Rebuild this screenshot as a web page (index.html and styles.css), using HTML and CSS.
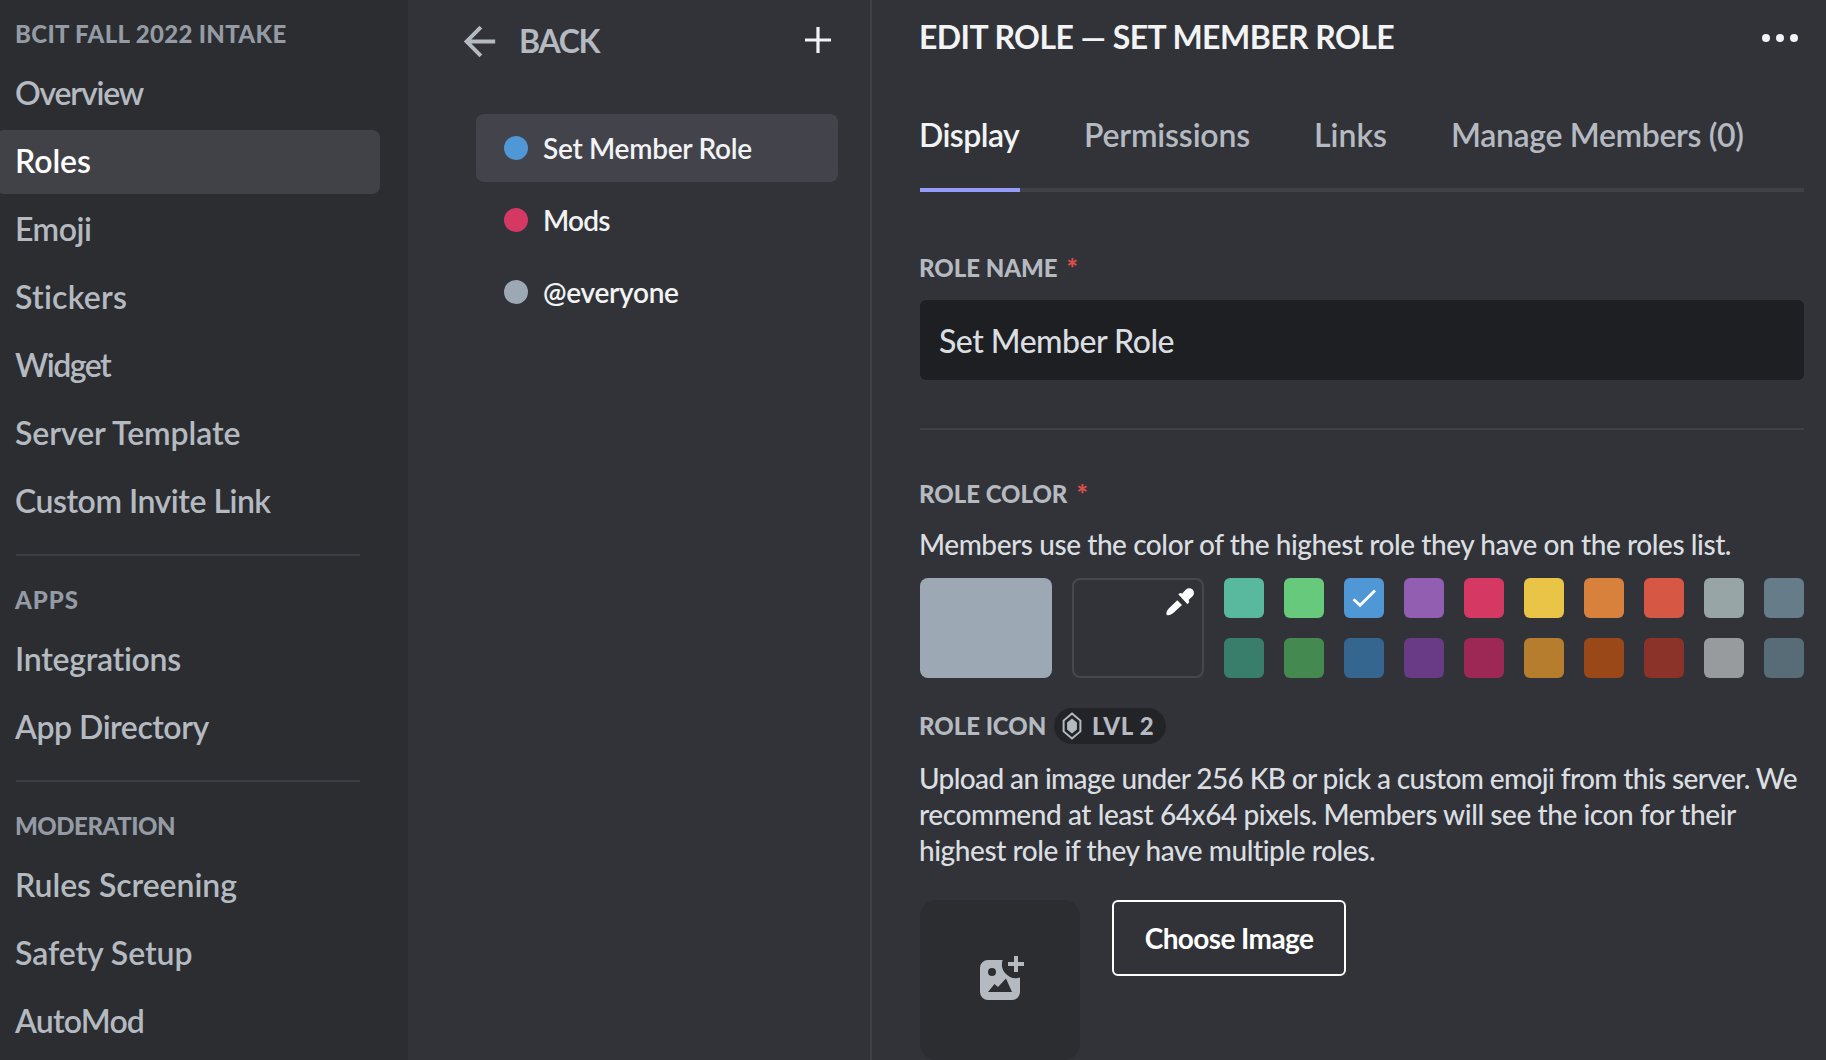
FILE: index.html
```html
<!DOCTYPE html>
<html lang="en">
<head>
<meta charset="utf-8">
<title>Edit Role</title>
<link rel="stylesheet" href="styles.css">
</head>
<body>
<div class="app">
  <nav class="sidebar">
    <h2 class="nav-heading server-name">BCIT FALL 2022 INTAKE</h2>
    <a class="nav-item tight-4">Overview</a>
    <a class="nav-item selected">Roles</a>
    <a class="nav-item tight-2">Emoji</a>
    <a class="nav-item loose-1">Stickers</a>
    <a class="nav-item tight-5">Widget</a>
    <a class="nav-item">Server Template</a>
    <a class="nav-item tight-2">Custom Invite Link</a>
    <hr class="nav-divider">
    <h2 class="nav-heading loose-3">APPS</h2>
    <a class="nav-item tight-1">Integrations</a>
    <a class="nav-item tight-2">App Directory</a>
    <hr class="nav-divider">
    <h2 class="nav-heading tight-2">MODERATION</h2>
    <a class="nav-item">Rules Screening</a>
    <a class="nav-item">Safety Setup</a>
    <a class="nav-item tight-3">AutoMod</a>
  </nav>

  <section class="roles">
    <header class="roles-header">
      <svg class="back-icon" viewBox="0 0 24 24"><path d="M20 11H7.830l5.590-5.590L12 4l-8 8 8 8 1.410-1.410L7.830 13H20v-2z"/></svg>
      <span class="back-label">BACK</span>
      <svg class="plus-icon" viewBox="0 0 26 26"><path d="M13 0v26M0 13h26"/></svg>
    </header>
    <ul class="role-list">
      <li class="role active tight-1"><span class="dot blue"></span>Set Member Role</li>
      <li class="role tight-3"><span class="dot pink"></span>Mods</li>
      <li class="role tight-1"><span class="dot gray"></span>@everyone</li>
    </ul>
  </section>

  <main class="editor">
    <header class="editor-header">
      <h1 class="title">EDIT ROLE — SET MEMBER ROLE</h1>
      <svg class="more-icon" viewBox="0 0 36 8"><circle cx="4" cy="4" r="4"/><circle cx="18" cy="4" r="4"/><circle cx="32" cy="4" r="4"/></svg>
    </header>
    <div class="tabs">
      <a class="tab current">Display</a>
      <a class="tab permissions">Permissions</a>
      <a class="tab">Links</a>
      <a class="tab members">Manage Members (0)</a>
    </div>

    <h3 class="label name-label">ROLE NAME<span class="required">*</span></h3>
    <div class="name-input">Set Member Role</div>
    <hr class="divider">

    <h3 class="label">ROLE COLOR<span class="required">*</span></h3>
    <p class="text">Members use the color of the highest role they have on the roles list.</p>
    <div class="colors">
      <div class="color-default"></div>
      <div class="color-custom">
        <svg class="dropper" viewBox="0 0 28 28"><path d="M12.3 6.2L14.2 5l2 .6L20 1.6A4.6 4.6 0 0 1 26.600 8.200l-4 3.900.7 2-1.800 2.200zM11.300 12.200L16 17l-9 8.300Q4 27.600 1.600 27.300.3 27 .3 25.500.6 22.500 3 20.200z"/></svg>
      </div>
      <div class="swatches">
        <i class="swatch teal"></i><i class="swatch green"></i><i class="swatch blue"><svg viewBox="0 0 40 40"><path d="M9.5 21.3l6.5 6L31 12.5"/></svg></i><i class="swatch purple"></i><i class="swatch pink"></i><i class="swatch yellow"></i><i class="swatch orange"></i><i class="swatch red"></i><i class="swatch light-gray"></i><i class="swatch slate"></i>
        <i class="swatch dark-teal"></i><i class="swatch dark-green"></i><i class="swatch dark-blue"></i><i class="swatch dark-purple"></i><i class="swatch dark-pink"></i><i class="swatch dark-yellow"></i><i class="swatch dark-orange"></i><i class="swatch dark-red"></i><i class="swatch dark-gray"></i><i class="swatch dark-slate"></i>
      </div>
    </div>

    <div class="icon-heading">
      <h3 class="label">ROLE ICON</h3>
      <span class="level">
        <svg class="level-icon" viewBox="0 0 20 28"><path class="ring" d="M10 1.600l8.400 7v10.800l-8.400 7-8.400-7V8.600z"/><path d="M10 6.500l4.900 4v7l-4.900 4-4.900-4v-7z"/></svg>
        <span class="level-text">LVL 2</span>
      </span>
    </div>
    <p class="text upload-text"><span class="first-line">Upload an image under 256 KB or pick a custom emoji from this server. We</span><br>recommend at least 64x64 pixels. Members will see the icon for their<br>highest role if they have multiple roles.</p>
    <div class="upload">
      <div class="image-box">
        <svg class="image-icon" viewBox="0 0 44 44"><path fill-rule="evenodd" d="M8 4h14.600A14 14 0 0 0 40 21.600V36a8 8 0 0 1-8 8H8a8 8 0 0 1-8-8V12a8 8 0 0 1 8-8zm4 8a4 4 0 1 0 0 8 4 4 0 0 0 0-8zM8 36h24l-6-13.500-8 8.500-3.500-3z"/><path d="M34 0h4v6h6v4h-6v6h-4v-6h-6V6h6z"/></svg>
      </div>
      <button class="choose">Choose Image</button>
    </div>
  </main>
</div>
</body>
</html>
```
FILE: styles.css
```css
* { box-sizing: border-box; }

body, h1, h2, h3, p, ul, hr { margin: 0; padding: 0; border: 0; }

body {
  background: #313338;
  color: #dbdee1;
  font-family: Lato, "Noto Sans", sans-serif;
  font-size: 28px;
  font-weight: 500;
  overflow: hidden;
}

svg { display: block; fill: currentColor; flex: none; }

.app { display: flex; height: 1060px; overflow: hidden; white-space: nowrap; }

/* Settings navigation */
.sidebar { flex: none; width: 408px; background: #2b2d31; padding-right: 28px; }
.nav-heading {
  padding: 19px 0 13px 15px;
  font-size: 24px;
  line-height: 30px;
  font-weight: 900;
  color: #949ba4;
}
.server-name { letter-spacing: 0.32px; }
.nav-item {
  display: block;
  height: 64px;
  padding-left: 15px;
  margin-bottom: 4px;
  font-size: 32px;
  line-height: 62px;
  font-weight: 600;
  color: #b5bac1;
  letter-spacing: -0.07px;
}
.nav-item.selected { margin-left: -4px; padding-left: 19px; background: #414247; color: #fff; border-radius: 8px; }
.nav-divider { height: 2px; margin: 20px 20px 10px 16px; background: #3b3d44; }

/* Role list */
.roles { flex: none; width: 464px; border-right: 2px solid #3f4147; }
.roles-header { display: flex; align-items: flex-start; height: 114px; padding: 18px 39px 0 48px; color: #b5bac1; }
.back-icon { width: 47px; height: 47px; }
.back-label { margin-left: 16px; font-size: 32px; line-height: 45px; font-weight: 700; letter-spacing: -1.3px; }
.plus-icon { width: 26px; height: 26px; margin: 9px 0 0 auto; fill: none; stroke: #f2f3f5; stroke-width: 3.2; }
.role-list { list-style: none; padding: 0 32px 0 68px; display: grid; gap: 4px; }
.role { display: flex; align-items: center; gap: 15px; height: 68px; padding: 0 28px; line-height: 68px; font-weight: 600; color: #f2f3f5; border-radius: 8px; }
.role.active { background: #43444b; }
.dot { width: 24px; height: 24px; border-radius: 50%; }

/* Role editor */
.editor { flex: 1; min-width: 0; padding: 16px 22px 0 48px; }
.editor-header { display: flex; justify-content: space-between; height: 40px; color: #f2f3f5; }
.title { font-size: 32px; line-height: 42px; font-weight: 700; letter-spacing: -0.56px; text-indent: -1px; }
.more-icon { width: 36px; height: 8px; margin: 18px 6px 0 0; }
.tabs { display: flex; gap: 64px; height: 78px; margin-top: 58px; font-size: 32px; line-height: 42px; font-weight: 600; color: #b5bac1; box-shadow: inset 0 -4px #3f4147; }
.tab.current { width: 100px; color: #f2f3f5; border-bottom: 4px solid #949cf7; letter-spacing: -0.55px; text-indent: -1px; }
.tab.permissions { letter-spacing: -0.19px; }
.tab.members { letter-spacing: -0.35px; }
.label { height: 24px; font-size: 24px; line-height: 26px; font-weight: 900; color: #b5bac1; text-indent: -1px; letter-spacing: -0.03px; }
.required { margin-left: 9px; color: #da4f4b; font-size: 27px; line-height: 0; vertical-align: -1px; }
.name-label { margin: 63px 0 21px; }
.name-input { height: 80px; padding-left: 19px; border-radius: 6px; background: #1e1f22; font-size: 32px; line-height: 82px; letter-spacing: -0.5px; }
.divider { height: 2px; margin: 48px 0 51px; background: #3f4147; }
.text { margin: 21px 0 0 -1px; line-height: 36px; letter-spacing: -0.43px; }
.colors { display: flex; gap: 20px; margin-top: 16px; }
.color-default { width: 132px; height: 100px; border-radius: 8px; background: #9ca8b4; }
.color-custom { width: 132px; height: 100px; padding: 8px; border: 2px solid #46484c; border-radius: 8px; color: #fff; }
.dropper { width: 28px; height: 28px; margin-left: auto; }
.swatches { display: grid; grid-template-columns: repeat(10, 40px); grid-auto-rows: 40px; gap: 20px; }
.swatch { border-radius: 6px; }
.swatch path { fill: none; stroke: #fff; stroke-width: 2.8; }
.blue { background: #5097d5; }
.pink { background: #d63864; }
.gray { background: #9ca8b4; }
.teal { background: #59b99e; }
.green { background: #67c97b; }
.purple { background: #925eb1; }
.yellow { background: #e9c446; }
.orange { background: #d8813c; }
.red { background: #d75745; }
.light-gray { background: #97a5a6; }
.slate { background: #667c89; }
.dark-teal { background: #397e6b; }
.dark-green { background: #448a50; }
.dark-blue { background: #34668f; }
.dark-purple { background: #693a85; }
.dark-pink { background: #9d2855; }
.dark-yellow { background: #b67d2e; }
.dark-orange { background: #9b4819; }
.dark-red { background: #8c3329; }
.dark-gray { background: #989b9e; }
.dark-slate { background: #586c77; }

.icon-heading { display: flex; height: 36px; margin-top: 30px; }
.icon-heading .label { width: 134px; line-height: 35px; }
.level { display: flex; align-items: center; width: 112px; border-radius: 18px; background: #232428; color: #b5bac1; }
.level-icon { width: 20px; height: 28px; margin: 0 10px 0 8px; }
.ring { fill: none; stroke: currentColor; stroke-width: 2; }
.level-text { align-self: flex-start; font-size: 24px; line-height: 35px; font-weight: 900; letter-spacing: 0.75px; }
.upload-text { margin-top: 16px; }
.first-line { letter-spacing: -0.62px; }
.upload { display: flex; align-items: flex-start; gap: 32px; margin-top: 32px; }
.image-box { display: flex; width: 160px; height: 160px; padding: 56px 0 0 60px; border-radius: 16px; background: #2b2d31; color: #b5bac1; }
.image-icon { width: 44px; height: 44px; }
.choose { width: 234px; height: 76px; padding: 0; border: 2px solid #fff; border-radius: 6px; background: none; color: #fff; font: 700 28px/36px Lato, "Noto Sans", sans-serif; letter-spacing: -0.6px; }

/* Tracking steps */
.tight-1 { letter-spacing: -0.28px; }
.tight-2 { letter-spacing: -0.48px; }
.tight-3 { letter-spacing: -0.8px; }
.tight-4 { letter-spacing: -1.2px; }
.tight-5 { letter-spacing: -1.5px; }
.loose-1 { letter-spacing: 0.25px; }
.loose-3 { letter-spacing: 0.95px; }
```
